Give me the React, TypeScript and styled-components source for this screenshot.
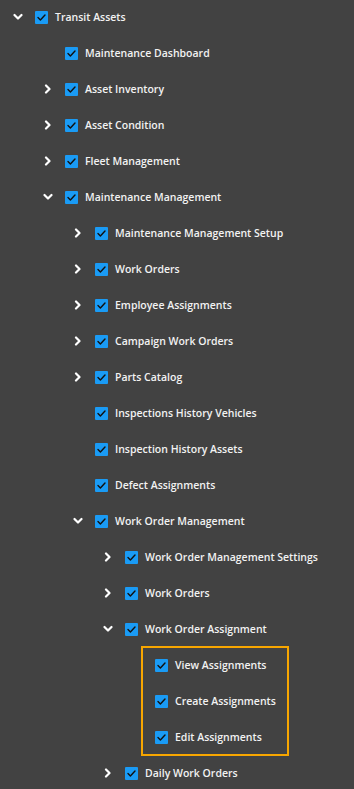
import React from 'react';
import styled, { createGlobalStyle } from 'styled-components';

type Node = {
  label: string;
  level: number;
  toggle?: 'open' | 'closed';
};

const GlobalStyle = createGlobalStyle`
  html, body {
    margin: 0;
    padding: 0;
    background: #424242;
  }
  body {
    font-family: 'Open Sans', 'Noto Sans', sans-serif;
  }
`;

const Tree = styled.div`
  width: 354px;
  min-height: 789px;
  background: #424242;
  margin-top: -1px;
  overflow: hidden;
`;

const Row = styled.div<{ $level: number }>`
  display: flex;
  align-items: center;
  height: 36px;
  padding-left: ${props => props.$level * 30}px;
`;

const Toggle = styled.span`
  display: flex;
  align-items: center;
  justify-content: center;
  width: 35px;
  flex-shrink: 0;
  color: #ffffff;
`;

const Box = styled.span`
  display: flex;
  align-items: center;
  justify-content: center;
  width: 13px;
  height: 13px;
  border-radius: 1px;
  background: #1a9bf5;
  flex-shrink: 0;
`;

const Label = styled.span`
  margin-left: 7px;
  font-size: 10.5px;
  font-weight: 600;
  color: #f2f2f2;
  white-space: nowrap;
`;

const Highlight = styled.div`
  margin-left: 142px;
  width: 146px;
  outline: 2.5px solid #f7a600;
  outline-offset: -1px;
`;

const HighlightRow = styled.div`
  display: flex;
  align-items: center;
  height: 36px;
  padding-left: 13px;
`;

const nodes: Node[] = [
  { label: 'Transit Assets', level: 0, toggle: 'open' },
  { label: 'Maintenance Dashboard', level: 1 },
  { label: 'Asset Inventory', level: 1, toggle: 'closed' },
  { label: 'Asset Condition', level: 1, toggle: 'closed' },
  { label: 'Fleet Management', level: 1, toggle: 'closed' },
  { label: 'Maintenance Management', level: 1, toggle: 'open' },
  { label: 'Maintenance Management Setup', level: 2, toggle: 'closed' },
  { label: 'Work Orders', level: 2, toggle: 'closed' },
  { label: 'Employee Assignments', level: 2, toggle: 'closed' },
  { label: 'Campaign Work Orders', level: 2, toggle: 'closed' },
  { label: 'Parts Catalog', level: 2, toggle: 'closed' },
  { label: 'Inspections History Vehicles', level: 2 },
  { label: 'Inspection History Assets', level: 2 },
  { label: 'Defect Assignments', level: 2 },
  { label: 'Work Order Management', level: 2, toggle: 'open' },
  { label: 'Work Order Management Settings', level: 3, toggle: 'closed' },
  { label: 'Work Orders', level: 3, toggle: 'closed' },
  { label: 'Work Order Assignment', level: 3, toggle: 'open' },
];

const highlighted = ['View Assignments', 'Create Assignments', 'Edit Assignments'];

const Chevron = ({ open }: { open: boolean }) => (
  <svg width="10" height="10" viewBox="0 0 10 10">
    <polyline
      points={open ? '1.5,3 5,6.5 8.5,3' : '3,1.5 6.5,5 3,8.5'}
      fill="none"
      stroke="currentColor"
      strokeWidth="2.2"
      strokeLinecap="round"
      strokeLinejoin="round"
    />
  </svg>
);

const Check = () => (
  <Box>
    <svg width="11" height="11" viewBox="0 0 11 11">
      <polyline
        points="2,5.6 4.4,8 9,3"
        fill="none"
        stroke="#111"
        strokeWidth="1.4"
        strokeLinecap="round"
        strokeLinejoin="round"
      />
    </svg>
  </Box>
);

const TreeRow = ({ node }: { node: Node }) => (
  <Row $level={node.level}>
    <Toggle>{node.toggle && <Chevron open={node.toggle === 'open'} />}</Toggle>
    <Check />
    <Label>{node.label}</Label>
  </Row>
);

export default function App() {
  return (
    <>
      <GlobalStyle />
      <Tree>
        {nodes.map((node, i) => (
          <TreeRow key={i} node={node} />
        ))}
        <Highlight>
          {highlighted.map(label => (
            <HighlightRow key={label}>
              <Check />
              <Label>{label}</Label>
            </HighlightRow>
          ))}
        </Highlight>
        <TreeRow node={{ label: 'Daily Work Orders', level: 3, toggle: 'closed' }} />
      </Tree>
    </>
  );
}
